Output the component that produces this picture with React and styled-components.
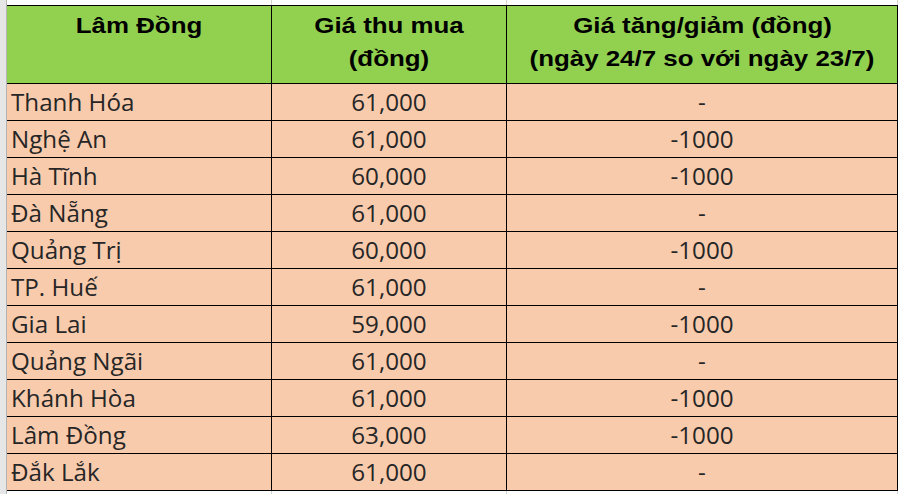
import React from "react";
import styled, { createGlobalStyle } from "styled-components";

const GlobalStyle = createGlobalStyle`
  html, body {
    margin: 0;
    padding: 0;
    background: #ffffff;
  }
  * {
    box-sizing: border-box;
  }
`;

const Sheet = styled.div`
  display: flex;
  width: 902px;
  height: 494px;
  overflow: hidden;
`;

const Gutter = styled.div`
  width: 7px;
  flex-shrink: 0;
  background: #e6e6e6;
  border-right: 1px solid #b4b4b4;
`;

const Main = styled.div`
  display: flex;
  flex-direction: column;
`;

const Grid = styled.div`
  display: grid;
  grid-template-columns: 265px 235px 391px;
`;

const StripCell = styled.div`
  height: ${(p) => p.h}px;
  border-right: 1px solid #d4d4d4;
`;

const Table = styled(Grid)`
  border-top: 1px solid #000;
`;

const HeadCell = styled.div`
  height: 78px;
  background: #92d050;
  border-right: 1px solid #000;
  border-bottom: 1px solid #000;
  padding-top: 3px;
  text-align: center;
  font-family: "Liberation Sans", Arial, sans-serif;
  font-weight: bold;
  font-size: 22.5px;
  line-height: 33px;
  color: #000;
`;

const HeadText = styled.span`
  display: inline-block;
  transform: scaleX(1.15);
  transform-origin: center;
  white-space: nowrap;
`;

const Cell = styled.div`
  height: 37px;
  background: #f8cbad;
  border-right: 1px solid #000;
  border-bottom: 1px solid #000;
  padding: 0 4px;
  text-align: ${(p) => p.align || "left"};
  font-family: "Open Sans", "Noto Sans", sans-serif;
  font-size: 24.2px;
  line-height: 35px;
  color: #262626;
  white-space: nowrap;
`;

const rows = [
  ["Thanh Hóa", "61,000", "-"],
  ["Nghệ An", "61,000", "-1000"],
  ["Hà Tĩnh", "60,000", "-1000"],
  ["Đà Nẵng", "61,000", "-"],
  ["Quảng Trị", "60,000", "-1000"],
  ["TP. Huế", "61,000", "-"],
  ["Gia Lai", "59,000", "-1000"],
  ["Quảng Ngãi", "61,000", "-"],
  ["Khánh Hòa", "61,000", "-1000"],
  ["Lâm Đồng", "63,000", "-1000"],
  ["Đắk Lắk", "61,000", "-"],
];

const Strip = ({ h }) => (
  <Grid>
    <StripCell h={h} />
    <StripCell h={h} />
    <StripCell h={h} />
  </Grid>
);

const App = () => {
  return (
    <>
      <GlobalStyle />
      <Sheet>
        <Gutter />
        <Main>
          <Strip h={5} />
          <Table>
            <HeadCell>
              <HeadText>Lâm Đồng</HeadText>
            </HeadCell>
            <HeadCell>
              <HeadText>Giá thu mua</HeadText>
              <br />
              <HeadText>(đồng)</HeadText>
            </HeadCell>
            <HeadCell>
              <HeadText>Giá tăng/giảm (đồng)</HeadText>
              <br />
              <HeadText>(ngày 24/7 so với ngày 23/7)</HeadText>
            </HeadCell>
            {rows.map((r) => (
              <React.Fragment key={r[0]}>
                <Cell>{r[0]}</Cell>
                <Cell align="center">{r[1]}</Cell>
                <Cell align="center">{r[2]}</Cell>
              </React.Fragment>
            ))}
          </Table>
          <Strip h={4} />
        </Main>
      </Sheet>
    </>
  );
};

export default App;
